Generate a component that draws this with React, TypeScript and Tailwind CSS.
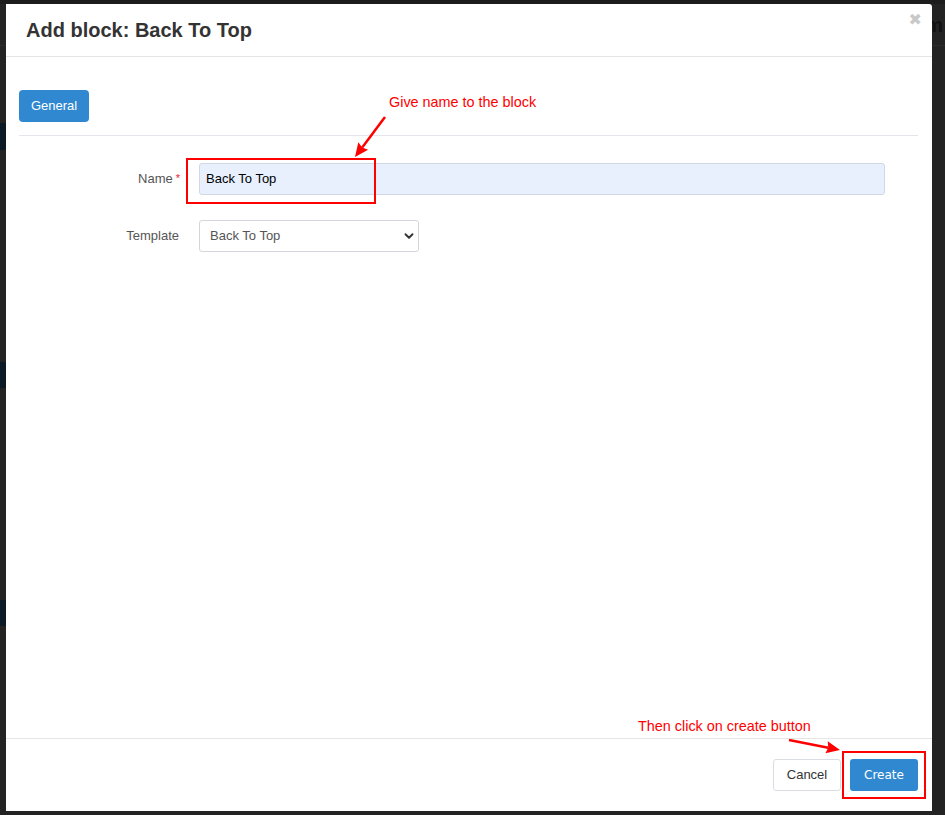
import { ChevronDown } from 'lucide-react'

// Dimmed page behind the modal
function BackgroundPage() {
  return (
    <div className="h-full w-full bg-[#232323] flex flex-col">
      <div className="h-[4px] bg-[#1c1c1c]" />
      <div className="h-[42px] flex justify-end items-center pr-[2px] border-b border-[#2c2c2c]">
        <span className="text-[20px] font-bold text-[#111]">m</span>
      </div>
      <div className="h-[77px]" />
      <div className="h-[27px] w-[8px] bg-[#0b1a24]" />
      <div className="h-[212px]" />
      <div className="h-[26px] w-[8px] bg-[#0b1a24]" />
      <div className="h-[212px]" />
      <div className="h-[26px] w-[8px] bg-[#0b1a24]" />
    </div>
  )
}

function Arrow({ x1, y1, x2, y2 }: { x1: number; y1: number; x2: number; y2: number }) {
  const ang = Math.atan2(y2 - y1, x2 - x1)
  const len = 15
  const spread = 0.42
  const ax = x2 - len * Math.cos(ang - spread)
  const ay = y2 - len * Math.sin(ang - spread)
  const bx = x2 - len * Math.cos(ang + spread)
  const by = y2 - len * Math.sin(ang + spread)
  const mx = x2 - len * 0.8 * Math.cos(ang)
  const my = y2 - len * 0.8 * Math.sin(ang)
  return (
    <>
      <line x1={x1} y1={y1} x2={mx} y2={my} stroke="#ff0000" strokeWidth="2.5" />
      <polygon points={`${x2},${y2} ${ax},${ay} ${mx},${my} ${bx},${by}`} fill="#ff0000" />
    </>
  )
}

export default function App() {
  return (
    <div className="relative h-[815px] w-[945px] overflow-hidden font-['Liberation_Sans',Arial,sans-serif]">
      <BackgroundPage />

      {/* Modal */}
      <div className="absolute left-[6px] top-[4px] w-[926px] h-[807px] bg-white rounded-tr-[3px] flex flex-col">
        <div className="relative h-[53px] shrink-0 border-b border-[#e5e5e5] flex items-center pl-[20px]">
          <h4 className="text-[20px] font-bold text-[#333] leading-none">Add block: Back To Top</h4>
          <span className="absolute right-[10px] top-[8px] text-[16px] font-bold text-[#c8c8c8] leading-none font-['DejaVu_Sans',sans-serif]">✖</span>
        </div>

        <div className="flex-1 pl-[13px] pr-[14px] pt-[33px]">
          <div className="flex">
            <button className="h-[32px] w-[70px] rounded-[4px] bg-[#3089d0] text-white text-[13px]">General</button>
          </div>
          <div className="mt-[13px] border-t border-[#e4e6eb]" />

          <div className="mt-[27px] flex items-center">
            <div className="w-[161px] text-right text-[13px] text-[#555]">
              Name<span className="text-[#e23] ml-[3px] relative top-[-1px] text-[11px]">*</span>
            </div>
            <div className="w-[19px]" />
            <div className="h-[32px] w-[686px] rounded-[3px] border border-[#cfd8e3] bg-[#e8f0fe] flex items-center px-[6px] text-[13px] text-black">
              Back To Top
            </div>
          </div>

          <div className="mt-[25px] flex items-center">
            <div className="w-[160px] text-right text-[13px] text-[#555]">Template</div>
            <div className="w-[20px]" />
            <div className="h-[32px] w-[220px] rounded-[3px] border border-[#d3d7dc] bg-white flex items-center justify-between pl-[10px] pr-[2px] text-[13px] text-[#555]">
              <span>Back To Top</span>
              <ChevronDown size={14} strokeWidth={3.2} className="text-[#333]" />
            </div>
          </div>
        </div>

        <div className="h-[73px] shrink-0 border-t border-[#e5e5e5] flex justify-end items-start pt-[20px] pr-[14px] gap-[9px]">
          <button className="h-[32px] w-[68px] rounded-[3px] border border-[#d9dde2] bg-white text-[13px] text-[#333]">Cancel</button>
          <button className="h-[32px] w-[68px] rounded-[3px] bg-[#3089d0] text-[12px] text-white font-['DejaVu_Sans',sans-serif]">Create</button>
        </div>
      </div>

      {/* Annotations */}
      <div className="absolute left-[389px] top-[95px] text-[14.4px] text-[#ff0000] leading-none">Give name to the block</div>
      <div className="absolute left-[638px] top-[719px] text-[14.4px] text-[#ff0000] leading-none">Then click on create button</div>
      <div className="absolute left-[186px] top-[158px] w-[190px] h-[46px] border-2 border-[#ff0000]" />
      <div className="absolute left-[842px] top-[751px] w-[84px] h-[48px] border-2 border-[#ff0000]" />
      <svg className="absolute left-0 top-0" width="945" height="815" viewBox="0 0 945 815">
        <Arrow x1={385} y1={117} x2={355} y2={157} />
        <Arrow x1={789} y1={740} x2={840} y2={750} />
      </svg>
    </div>
  )
}
